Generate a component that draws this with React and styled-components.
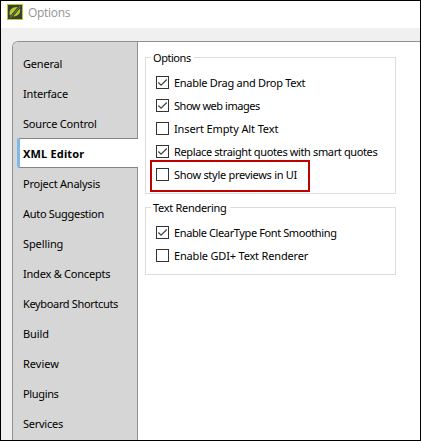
import React from 'react';
import styled, { createGlobalStyle } from 'styled-components';

const GlobalStyle = createGlobalStyle`
  * { box-sizing: border-box; }
  body { margin: 0; }
`;

const Window = styled.div`
  width: 421px;
  height: 441px;
  display: flex;
  flex-direction: column;
  overflow: hidden;
  border: 1px solid #000;
  background: #f0f0f0;
  color: #000;
  font-family: "Noto Sans", sans-serif;
  font-size: 11px;
`;

const TitleBar = styled.header`
  flex: none;
  height: 27px;
  display: flex;
  align-items: center;
  gap: 5px;
  padding: 0 0 5px 6px;
  background: #fff;
  color: #949494;
  font-family: "Open Sans", sans-serif;
  font-size: 12px;
  letter-spacing: -0.3px;
`;

const Body = styled.div`
  flex: 1;
  display: flex;
  margin: 13px 0 0 11px;
  border-top: 1px solid #919191;
  border-left: 1px solid #919191;
  border-top-left-radius: 6px;
  background: #fff;
  overflow: hidden;
`;

const Sidebar = styled.nav`
  width: 125px;
  flex: none;
  display: flex;
  flex-direction: column;
  padding-top: 7px;
  background: linear-gradient(#919191, #919191) right / 1px 100% no-repeat #d6d6d6;
`;

const Tab = styled.div`
  flex: none;
  height: 30px;
  padding-left: 10px;
  line-height: 30px;
  white-space: pre;
  letter-spacing: ${({ $track }) => $track || 0}px;
`;

const ActiveTab = styled(Tab)`
  height: 30px;
  margin: -1px 0 1px 4px;
  padding-left: 3px;
  border: 1px solid #858585;
  border-left: 3px solid #7db9ea;
  border-right: 0;
  border-radius: 2px 0 0 2px;
  background: #fff;
  font-weight: 700;
  line-height: 30px;
`;

const Content = styled.main`
  flex: 1;
  padding: 15px 24px 0 7px;
`;

const Group = styled.section`
  width: 251px;
  height: ${({ $height }) => $height}px;
  border: 1px solid #dcdcdc;
  margin-bottom: 13px;
`;

const Legend = styled.h2`
  width: max-content;
  height: 16px;
  margin: -9px 0 6px 5px;
  padding: 0 3px 0 2px;
  background: #fff;
  font-size: 11px;
  font-weight: 400;
  line-height: 17px;
  letter-spacing: ${({ $track }) => $track || 0}px;
`;

const Option = styled.label`
  position: relative;
  display: flex;
  align-items: center;
  gap: 5px;
  height: 23px;
  padding-left: 10px;
  white-space: pre;
  letter-spacing: ${({ $track }) => $track || 0}px;
`;

const Box = styled.span`
  flex: none;
  width: 13px;
  height: 13px;
  display: flex;
  border: 1px solid #333;
  background: #fff;
`;

const Highlight = styled.span`
  position: absolute;
  left: 4px;
  top: -3px;
  width: 160px;
  height: 32px;
  border: 2px solid #c00000;
`;

const Logo = () => (
  <svg width="16" height="16" viewBox="0 0 16 16">
    <rect width="16" height="16" fill="#b5cc25" />
    <rect x="1" y="1" width="14" height="14" fill="#3c3e3b" />
    <path d="M2.7 10.8C1.6 6.3 5 2.9 10.8 3.1L3.8 11.6Z" fill="#b5cc25" />
    <path d="M12.9 4.6C14 9 11.2 12.6 6.2 12.5Z" fill="#b5cc25" />
    <path d="M3.2 13.8L13.4 2" stroke="#b5cc25" strokeWidth=".6" />
    <path d="M4.3 11.2L11.4 3.2" stroke="#3c3e3b" strokeWidth=".7" />
  </svg>
);

const Check = () => (
  <svg width="11" height="11" viewBox="0 0 11 11">
    <path d="M1.3 5.5L4.1 8.2L9.8 2.5" fill="none" stroke="#444" strokeWidth="1.25" />
  </svg>
);

const tabs = [
  ['General', -0.2], ['Interface', -0.2], ['Source Control', -0.19], ['XML Editor', 0.17],
  ['Project Analysis', -0.22], ['Auto Suggestion', -0.3], ['Spelling', -0.1],
  ['Index & Concepts', -0.22], ['Keyboard Shortcuts', -0.35], ['Build', -0.1],
  ['Review', 0], ['Plugins', -0.35], ['Services', -0.25],
];

const groups = [
  {
    title: 'Options', track: -0.45, height: 137,
    options: [
      { text: 'Enable Drag and Drop Text', checked: true, track: -0.28 },
      { text: 'Show web images', checked: true, track: -0.47 },
      { text: 'Insert Empty Alt Text', track: -0.12 },
      { text: 'Replace straight quotes with smart quotes', checked: true, track: -0.37 },
      { text: 'Show style previews in UI', highlighted: true, track: -0.28 },
    ],
  },
  {
    title: 'Text Rendering', track: -0.3, height: 68,
    options: [
      { text: 'Enable ClearType Font Smoothing', checked: true, track: -0.39 },
      { text: 'Enable GDI+ Text Renderer', track: -0.18 },
    ],
  },
];

export default function App() {
  return (
    <>
      <GlobalStyle />
      <Window>
        <TitleBar><Logo />Options</TitleBar>
        <Body>
          <Sidebar>
            {tabs.map(([name, track]) => {
              const Item = name === 'XML Editor' ? ActiveTab : Tab;
              return <Item key={name} $track={track}>{name}</Item>;
            })}
          </Sidebar>
          <Content>
            {groups.map((group) => (
              <Group key={group.title} $height={group.height}>
                <Legend $track={group.track}>{group.title}</Legend>
                {group.options.map((option) => (
                  <Option key={option.text} $track={option.track}>
                    <Box>{option.checked && <Check />}</Box>
                    {option.text}
                    {option.highlighted && <Highlight />}
                  </Option>
                ))}
              </Group>
            ))}
          </Content>
        </Body>
      </Window>
    </>
  );
}
